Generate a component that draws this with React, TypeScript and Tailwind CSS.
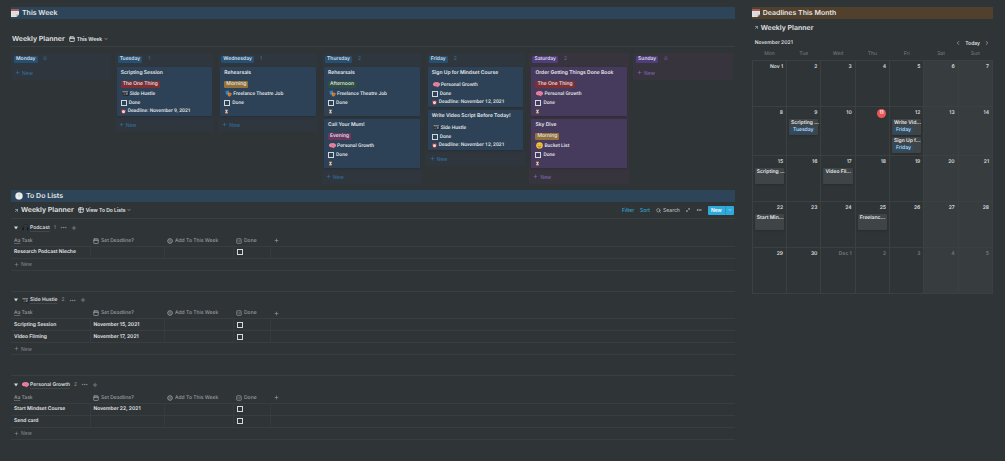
import React from 'react';
import { ArrowUpRight, Calendar, CheckSquare, ChevronDown, ChevronLeft, ChevronRight, Maximize2, MoreHorizontal, Plus, Search, Table2 } from 'lucide-react';

type Emoji = 'calendar' | 'clock' | 'camera' | 'masks' | 'brain' | 'alarm' | 'hourglass' | 'smile' | 'headphones';

const EmojiIcon = ({ name, className }: { name: Emoji; className: string }) => (
  <svg viewBox="0 0 16 16" className={`shrink-0 ${className}`} aria-hidden="true">
    {name === 'calendar' && (
      <>
        <path d="M0 0h16v12l-4 4H0z" fill="#e4e1e1" />
        <path d="M0 0h16v4H0z" fill="#a8595c" />
        <path d="M3 7h10M3 10h8M3 13h6" stroke="#cfcfd2" strokeWidth="1" />
        <path d="M16 11v5h-5z" fill="#4b5054" />
        <path d="M11 16v-5h5z" fill="#a4a6a8" />
      </>
    )}
    {name === 'clock' && (
      <>
        <circle cx="8" cy="8" r="7.500" fill="#b9c2c8" />
        <circle cx="8" cy="8" r="6.500" fill="#eef0f0" />
        <path d="M8 4V9" stroke="#7c868d" strokeWidth="1" />
        <path d="M8 13.500v-1M3 8h1M12 8h1" stroke="#b3babf" />
      </>
    )}
    {name === 'camera' && (
      <>
        <path d="M0 4h4l2-1h6l1 1h3v2l-1 1v6H2V8L0 7z" fill="#1c1e20" />
        <path d="M1 3h13v2.500H1z" fill="#aaa8a3" />
        <path d="M3 8h5v4H3z" fill="#5a5f62" />
        <circle cx="11" cy="9" r="2.500" fill="#7d8387" />
      </>
    )}
    {name === 'masks' && (
      <>
        <path d="M1 2l8-1v6c0 3-3 4-4 4S1 8 1 2z" fill="#2f8fd0" />
        <path d="M7 5l8 2c0 5-2 8-5 8s-5-4-3-10z" fill="#d9863c" />
        <path d="M3 4.500h1.500M6 4.500h1.500" stroke="#123" />
        <path d="M9 12c1-1.500 2.500-1.500 3.500 0M9 8.500h1M12 9h1" stroke="#a3302c" fill="none" strokeWidth="1.200" />
      </>
    )}
    {name === 'brain' && (
      <>
        <path d="M0 8c0-4 3-6 8-6s8 2 8 6c0 2-1 3-3 3 0 2-1 3-3 3-1 0-2-1-2-2-4 1-8-1-8-4z" fill="#f08aa8" />
        <path d="M4 5c2 0 3 1 3 3M8 3c0 2 2 3 4 2M3 9c2 1 4 0 5-1 2 2 4 1 5 0M9 14c0-2 0-3 2-3" fill="none" stroke="#cf4f78" strokeWidth="1" />
      </>
    )}
    {name === 'alarm' && (
      <>
        <path d="M1 4l3-3 2 2-4 4zM15 4l-3-3-2 2 4 4zM3 15l2-3M13 15l-2-3" fill="#c94444" stroke="#c94444" />
        <circle cx="8" cy="8.500" r="6.500" fill="#d94848" />
        <circle cx="8" cy="8.500" r="4.500" fill="#f3eeee" />
        <path d="M8 5.500v3h2" fill="none" stroke="#999" />
      </>
    )}
    {name === 'hourglass' && (
      <>
        <path d="M4 2h8c0 4-2 5-3 6 1 1 3 2 3 6H4c0-4 2-5 3-6-1-1-3-2-3-6z" fill="#dfe3e6" />
        <path d="M5.500 5h5L8 8zM5 13.500c0-2 2-3 3-3s3 1 3 3z" fill="#e2a355" />
        <path d="M3 1h10v2H3zM3 13h10v2H3z" fill="#8e5434" />
      </>
    )}
    {name === 'smile' && (
      <>
        <circle cx="8" cy="8" r="7.500" fill="#f2c53d" />
        <path d="M4 6.500h2.500M9.500 6.500H12" stroke="#7a4e12" strokeWidth="1" />
        <path d="M4 9.500h8c0 4-8 4-8 0z" fill="#b5772a" />
      </>
    )}
    {name === 'headphones' && (
      <>
        <path d="M2.500 11V8c0-8 11-8 11 0v3" fill="none" stroke="#17191a" strokeWidth="2" />
        <path d="M1.500 9h3v5h-3zM11.500 9h3v5h-3z" fill="#17191a" />
        <path d="M3 6c1-4 9-4 10 0" fill="none" stroke="#63686b" strokeWidth=".8" />
      </>
    )}
  </svg>
);

type Card = { title: string; tag?: string; icon: Emoji; relation: string; deadline?: string };
type Column = { day: string; weekend?: boolean; cards: Card[] };

const tagColors: Record<string, string> = {
  'The One Thing': 'bg-[#7d2f35]',
  Morning: 'bg-[#94703a]',
  Afternoon: 'bg-[#2f4d41]',
  Evening: 'bg-[#6b3560]',
};

const columns: Column[] = [
  { day: 'Monday', cards: [] },
  {
    day: 'Tuesday',
    cards: [{ title: 'Scripting Session', tag: 'The One Thing', icon: 'camera', relation: 'Side Hustle', deadline: 'November 9, 2021' }],
  },
  { day: 'Wednesday', cards: [{ title: 'Rehearsals', tag: 'Morning', icon: 'masks', relation: 'Freelance Theatre Job' }] },
  {
    day: 'Thursday',
    cards: [
      { title: 'Rehearsals', tag: 'Afternoon', icon: 'masks', relation: 'Freelance Theatre Job' },
      { title: 'Call Your Mum!', tag: 'Evening', icon: 'brain', relation: 'Personal Growth' },
    ],
  },
  {
    day: 'Friday',
    cards: [
      { title: 'Sign Up for Mindset Course', icon: 'brain', relation: 'Personal Growth', deadline: 'November 12, 2021' },
      { title: 'Write Video Script Before Today!', icon: 'camera', relation: 'Side Hustle', deadline: 'November 12, 2021' },
    ],
  },
  {
    day: 'Saturday',
    weekend: true,
    cards: [
      { title: 'Order Getting Things Done Book', tag: 'The One Thing', icon: 'brain', relation: 'Personal Growth' },
      { title: 'Sky Dive', tag: 'Morning', icon: 'smile', relation: 'Bucket List' },
    ],
  },
  { day: 'Sunday', weekend: true, cards: [] },
];

const groups: { name: string; icon: Emoji; tasks: { name: string; deadline: string }[] }[] = [
  { name: 'Podcast', icon: 'headphones', tasks: [{ name: 'Research Podcast Nieche', deadline: '' }] },
  {
    name: 'Side Hustle',
    icon: 'camera',
    tasks: [
      { name: 'Scripting Session', deadline: 'November 15, 2021' },
      { name: 'Video Filming', deadline: 'November 17, 2021' },
    ],
  },
  {
    name: 'Personal Growth',
    icon: 'brain',
    tasks: [
      { name: 'Start Mindset Course', deadline: 'November 22, 2021' },
      { name: 'Send card', deadline: '' },
    ],
  },
];

const weeks = [
  ['Nov 1', '2', '3', '4', '5', '6', '7'],
  ['8', '9', '10', '11', '12', '13', '14'],
  ['15', '16', '17', '18', '19', '20', '21'],
  ['22', '23', '24', '25', '26', '27', '28'],
  ['29', '30', 'Dec 1', '2', '3', '4', '5'],
];

const events: Record<string, { title: string; day?: string }[]> = {
  '9': [{ title: 'Scripting ...', day: 'Tuesday' }],
  '12': [
    { title: 'Write Vid...', day: 'Friday' },
    { title: 'Sign Up f...', day: 'Friday' },
  ],
  '15': [{ title: 'Scripting ...' }],
  '17': [{ title: 'Video Fil...' }],
  '22': [{ title: 'Start Min...' }],
  '25': [{ title: 'Freelanc...' }],
};

const checkbox = 'block h-[6px] w-[6px] shrink-0 appearance-none border border-[#d5d8da] checked:bg-[#2eaadc]';

const Banner = ({ icon, color, children }: { icon: Emoji; color: string; children: React.ReactNode }) => (
  <h2 className={`flex h-[12px] items-center gap-[3px] text-[7px] font-semibold leading-[12px] text-[#e6e7e8] ${color}`}>
    <EmojiIcon name={icon} className="h-[8px] w-[8px]" />
    {children}
  </h2>
);

const BoardCard = ({ card, weekend }: { card: Card; weekend?: boolean }) => (
  <article className={`mb-[3px] rounded-[1px] px-[4px] pt-[2px] pb-px shadow-sm ${weekend ? 'bg-[#463a5d]' : 'bg-[#2d4257]'}`}>
    <h4 className="mb-[3px] whitespace-nowrap font-semibold leading-[8px] text-[#e6e8ea]">{card.title}</h4>
    {card.tag && (
      <div className="flex h-[9px] items-center">
        <span className={`rounded-[1px] px-[2px] leading-[7px] ${tagColors[card.tag]}`}>{card.tag}</span>
      </div>
    )}
    <div className="font-['Roboto','Inter',sans-serif]">
      <div className="flex h-[9px] items-center gap-px pl-px">
        <EmojiIcon name={card.icon} className="h-[7px] w-[7px]" />
        {card.relation}
      </div>
      <label className="flex h-[9px] items-center gap-[2px]">
        <input type="checkbox" className={checkbox} />
        Done
      </label>
      <div className="flex h-[8px] items-center gap-[2px]">
        <EmojiIcon name={card.deadline ? 'alarm' : 'hourglass'} className="h-[5px] w-[5px]" />
        {card.deadline && <span>Deadline: {card.deadline}</span>}
      </div>
    </div>
  </article>
);

const Board = () => (
  <div className="mt-[6px] grid grid-cols-7 items-start gap-[4px] pr-[2px]">
    {columns.map((col) => (
      <section key={col.day} className={`min-w-0 px-[2px] pb-[2px] ${col.weekend ? 'bg-[#38343d]' : 'bg-[#2f363e]'}`}>
        <h3 className="flex h-[14px] items-center gap-[6px] pb-[2px] pl-px">
          <span className={`rounded-[1px] px-[2px] font-semibold leading-[7px] text-[#d9dfe4] ${col.weekend ? 'bg-[#503c7a]' : 'bg-[#264f70]'}`}>
            {col.day}
          </span>
          <span className={col.weekend ? 'text-[#705a9c]' : 'text-[#2f6d98]'}>{col.cards.length}</span>
        </h3>
        {col.cards.map((card) => (
          <BoardCard key={card.title} card={card} weekend={col.weekend} />
        ))}
        <button className={`flex h-[11px] w-full items-center gap-[2px] pl-[2px] ${col.weekend ? 'text-[#7a60ad]' : 'text-[#2f6d98]'}`}>
          <Plus strokeWidth={3} className="h-[5px] w-[5px]" /> New
        </button>
      </section>
    ))}
  </div>
);

const TaskGroup = ({ group }: { group: (typeof groups)[number] }) => (
  <section className="border-t border-[#3a3f42] pb-[20px]">
    <div className="flex h-[17px] items-center gap-[4px] pl-[3px] text-[#85898c]">
      <button aria-label={`Collapse ${group.name}`} className="text-[#d5d7d8]">
        <svg viewBox="0 0 10 10" className="h-[4px] w-[4px]" fill="currentColor">
          <path d="M0 1h10L5 9z" />
        </svg>
      </button>
      <h4 className="flex items-center gap-px font-semibold text-[#dcdedf]">
        <EmojiIcon name={group.icon} className="h-[7px] w-[7px]" />
        <span className="underline decoration-[#41464a] underline-offset-[2px]">{group.name}</span>
      </h4>
      <span>{group.tasks.length}</span>
      <button aria-label="Group options"><MoreHorizontal strokeWidth={3} className="block h-[7px] w-[7px]" /></button>
      <button aria-label="Add to group"><Plus strokeWidth={3} className="block h-[6px] w-[6px]" /></button>
    </div>
    <table className="w-full table-fixed border-collapse text-left leading-[8px]">
      <colgroup>
        <col className="w-[79px]" />
        <col className="w-[74px]" />
        <col className="w-[69px]" />
        <col className="w-[37px]" />
        <col />
      </colgroup>
      <thead className="text-[#989c9f]">
        <tr className="h-[10px] border-b border-[#383d40]">
          <th className="pl-[3px] font-medium"><span className="mr-px underline decoration-[#5f6467]">Aa</span>Task</th>
          <th className="pl-[3px] font-medium">
            <span className="flex items-center gap-[2px]"><Calendar strokeWidth={3} className="h-[6px] w-[6px]" />Set Deadline?</span>
          </th>
          <th className="pl-[3px] font-medium">
            <span className="flex items-center gap-[2px]">
              <svg viewBox="0 0 12 12" className="h-[6px] w-[6px]" fill="none" stroke="currentColor" strokeWidth="2">
                <circle cx="6" cy="6" r="4.500" />
                <path d="M4 5h4L6 8z" fill="currentColor" stroke="none" />
              </svg>
              Add To This Week
            </span>
          </th>
          <th className="pl-[3px] font-medium">
            <span className="flex items-center gap-[2px]"><CheckSquare strokeWidth={3} className="h-[6px] w-[6px]" />Done</span>
          </th>
          <th className="pl-[4px]">
            <button aria-label="Add property" className="block"><Plus strokeWidth={3} className="h-[5px] w-[5px]" /></button>
          </th>
        </tr>
      </thead>
      <tbody className="font-semibold text-[#e2e4e5]">
        {group.tasks.map((task) => (
          <tr key={task.name} className="h-[12px] border-b border-[#383d40]">
            <td className="border-r border-[#363b3e] pl-[3px]">{task.name}</td>
            <td className="border-r border-[#363b3e] pl-[3px]">{task.deadline}</td>
            <td className="border-r border-[#363b3e]" />
            <td className="border-r border-[#363b3e] pl-[3px]">
              <input type="checkbox" aria-label={`${task.name} done`} className={checkbox} />
            </td>
            <td />
          </tr>
        ))}
      </tbody>
    </table>
    <button className="flex h-[12px] w-full items-center gap-[2px] border-b border-[#383d40] pl-[3px] text-[#7b7f82]">
      <Plus strokeWidth={3} className="h-[5px] w-[5px]" /> New
    </button>
  </section>
);

const DeadlineCalendar = () => (
  <>
    <div className="mt-[7px] flex h-[8px] items-center pr-[3px] pl-[3px] font-semibold text-[#dcdedf]">
      <h4 className="flex-1">November 2021</h4>
      <div className="flex items-center gap-[4px]">
        <button aria-label="Previous month"><ChevronLeft strokeWidth={3} className="h-[6px] w-[6px] text-[#a2a6a9]" /></button>
        <button>Today</button>
        <button aria-label="Next month"><ChevronRight strokeWidth={3} className="h-[6px] w-[6px] text-[#a2a6a9]" /></button>
      </div>
    </div>
    <table className="mt-[2px] w-full table-fixed border-collapse">
      <thead>
        <tr className="h-[11px] text-[#7b7f82]">
          {['Mon', 'Tue', 'Wed', 'Thu', 'Fri', 'Sat', 'Sun'].map((d) => (
            <th key={d} className="font-normal">{d}</th>
          ))}
        </tr>
      </thead>
      <tbody>
        {weeks.map((week, w) => (
          <tr key={w} className="h-[46px]">
            {week.map((date, i) => {
              const outside = w === 4 && i > 1;
              return (
                <td key={date} className={`border border-[#3b4043] px-[2px] pt-[2px] pb-[2px] align-top ${i > 4 ? 'bg-[#373c3f]' : ''}`}>
                  <div className={`flex h-[10px] items-start justify-end pr-px font-semibold leading-[8px] ${outside ? 'text-[#74797c]' : 'text-[#dcdedf]'}`}>
                    {date === '11' ? (
                      <span className="flex h-[9px] w-[9px] items-center justify-center rounded-full bg-[#eb5757] text-white">11</span>
                    ) : (
                      date
                    )}
                  </div>
                  <div className="flex flex-col gap-[2px]">
                    {w > 0 && !outside && (events[date] || []).map((ev) => (
                      <div key={ev.title} className="h-[16px] rounded-[1px] bg-[#3f4447] px-[2px] shadow-sm">
                        <p className="whitespace-nowrap font-semibold leading-[8px] text-[#e6e8e9]">{ev.title}</p>
                        {ev.day && <span className="block w-fit rounded-[1px] bg-[#264f70] px-[2px] leading-[6px] text-[#d9dfe4]">{ev.day}</span>}
                      </div>
                    ))}
                  </div>
                </td>
              );
            })}
          </tr>
        ))}
      </tbody>
    </table>
  </>
);

const App: React.FC = () => {
  return (
    <div className="grid min-h-screen grid-cols-[3fr_1fr] gap-[17px] bg-[#2f3437] pt-[7px] pr-[12px] pl-[11px] font-['Inter','Liberation_Sans',sans-serif] text-[5px] font-medium leading-[8px] text-[#e2e5e7] [text-rendering:geometricPrecision]">
      <main className="min-w-0">
        <Banner icon="calendar" color="bg-[#2e4459]">This Week</Banner>
        <div className="mt-[12px] flex h-[16px] items-center gap-[4px] border-b border-[#3a3f42] pl-px">
          <h3 className="text-[7px] font-semibold">Weekly Planner</h3>
          <button className="flex items-center gap-[2px] font-semibold">
            <Calendar strokeWidth={3} className="h-[6px] w-[6px]" /> This Week <ChevronDown strokeWidth={3} className="h-[4px] w-[4px]" />
          </button>
        </div>
        <Board />

        <div className="mt-[6px]">
          <Banner icon="clock" color="bg-[#2e4459] px-[4px]">To Do Lists</Banner>
        </div>
        <div className="flex h-[16px] items-center pl-[3px]">
          <ArrowUpRight strokeWidth={3} className="mr-[2px] h-[5px] w-[5px] text-[#b5b8ba]" />
          <h3 className="mr-[4px] text-[7px] font-semibold">Weekly Planner</h3>
          <button className="flex items-center gap-[2px] font-semibold">
            <Table2 strokeWidth={3} className="h-[6px] w-[6px]" /> View To Do Lists <ChevronDown strokeWidth={3} className="h-[4px] w-[4px]" />
          </button>
          <div className="ml-auto flex items-center gap-[6px] pr-px text-[#b5b8ba]">
            <button className="text-[#2fa6d6]">Filter</button>
            <button className="text-[#2fa6d6]">Sort</button>
            <button className="flex items-center gap-[2px]"><Search strokeWidth={3} className="h-[5px] w-[5px]" />Search</button>
            <button aria-label="Expand"><Maximize2 strokeWidth={3} className="block h-[4px] w-[4px]" /></button>
            <button aria-label="More"><MoreHorizontal strokeWidth={3} className="block h-[6px] w-[6px]" /></button>
            <div className="flex h-[9px] items-center rounded-[1px] bg-[#2eaadc] font-semibold text-white">
              <button className="px-[3px]">New</button>
              <button aria-label="New options" className="flex h-full items-center border-l border-[#2795c2] px-[2px]">
                <ChevronDown strokeWidth={3} className="h-[4px] w-[4px]" />
              </button>
            </div>
          </div>
        </div>
        {groups.map((group) => (
          <TaskGroup key={group.name} group={group} />
        ))}
      </main>

      <aside className="min-w-0">
        <Banner icon="calendar" color="bg-[#50402c]">Deadlines This Month</Banner>
        <div className="mt-[4px] flex h-[9px] items-center gap-[2px] pl-[2px]">
          <ArrowUpRight strokeWidth={3} className="h-[5px] w-[5px] text-[#b5b8ba]" />
          <h3 className="text-[7px] font-semibold">Weekly Planner</h3>
        </div>
        <DeadlineCalendar />
      </aside>
    </div>
  );
};

export default App;
